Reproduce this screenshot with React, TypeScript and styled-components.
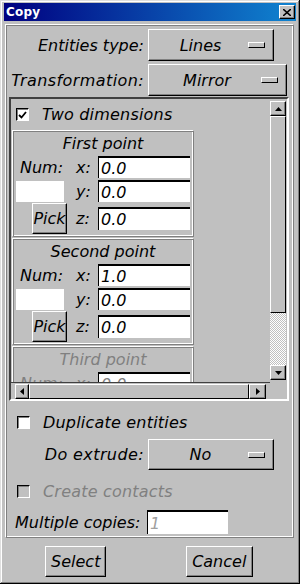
import { createGlobalStyle, styled } from 'styled-components';

const GlobalStyle = createGlobalStyle`
  html, body {
    margin: 0;
    padding: 0;
    background: #c0c0c0;
  }
  body {
    font-family: "DejaVu Sans", "Liberation Sans", sans-serif;
  }
`;

const raised = `
  border: 1px solid;
  border-color: #fff #000 #000 #fff;
  box-shadow: inset -1px -1px 0 #808080;
`;

function UpArrow() {
  return (
    <svg width='7' height='4' viewBox='0 0 7 4'>
      <path d='M3.5 0 L7 4 L0 4 Z' fill='#000' />
    </svg>
  );
}

function DownArrow() {
  return (
    <svg width='7' height='4' viewBox='0 0 7 4'>
      <path d='M0 0 L7 0 L3.5 4 Z' fill='#000' />
    </svg>
  );
}

function LeftArrow() {
  return (
    <svg width='4' height='7' viewBox='0 0 4 7'>
      <path d='M4 0 L4 7 L0 3.5 Z' fill='#000' />
    </svg>
  );
}

function RightArrow() {
  return (
    <svg width='4' height='7' viewBox='0 0 4 7'>
      <path d='M0 0 L4 3.5 L0 7 Z' fill='#000' />
    </svg>
  );
}

function PointGroup({ title, x, disabled }: { title: string; x: string; disabled?: boolean }) {
  return (
    <Group>
      <GroupTitle $disabled={disabled}>{title}</GroupTitle>
      <PointGrid $disabled={disabled}>
        <NumLabel>Num:</NumLabel>
        <CoordLabel>x:</CoordLabel>
        <Field value={x} readOnly $disabled={disabled} />

        <NumBox />
        <CoordLabel>y:</CoordLabel>
        <Field value='0.0' readOnly $disabled={disabled} />

        <PickButton>Pick</PickButton>
        <CoordLabel>z:</CoordLabel>
        <Field value='0.0' readOnly $tall $disabled={disabled} />
      </PointGrid>
    </Group>
  );
}

export default function App() {
  return (
    <>
      <GlobalStyle />
      <Window>
        <TitleBar>
          <TitleText>Copy</TitleText>
          <CloseButton>
            <svg width='8' height='7' viewBox='0 0 8 7'>
              <path d='M0 0 L8 7 M8 0 L0 7' stroke='#000' strokeWidth='1.6' />
            </svg>
          </CloseButton>
        </TitleBar>

        <Frame>
          <FormRow $height={32} $top={2}>
            <Label>Entities type:</Label>
            <DropButton $width={126}>
              <DropText>Lines</DropText>
              <Indicator />
            </DropButton>
          </FormRow>

          <FormRow $height={32} $top={4}>
            <Label $wide>Transformation:</Label>
            <DropButton $width={139}>
              <DropText>Mirror</DropText>
              <Indicator />
            </DropButton>
          </FormRow>

          <ScrollFrame>
            <Viewport>
              <CheckRow $height={31} $left={5}>
                <CheckBox>
                  <svg width='9' height='8' viewBox='0 0 9 8'>
                    <path d='M1 4 L3.5 6.5 L8 1' stroke='#000' strokeWidth='1.8' fill='none' />
                  </svg>
                </CheckBox>
                <CheckText>Two dimensions</CheckText>
              </CheckRow>
              <PointGroup title='First point' x='0.0' />
              <PointGroup title='Second point' x='1.0' />
              <PointGroup title='Third point' x='0.0' disabled />
            </Viewport>

            <VScroll>
              <ArrowButton $h={15}>
                <UpArrow />
              </ArrowButton>
              <Thumb $h={197} />
              <Track />
              <ArrowButton $h={15}>
                <DownArrow />
              </ArrowButton>
            </VScroll>

            <HScroll>
              <ArrowButton $w={14}>
                <LeftArrow />
              </ArrowButton>
              <Thumb $w={220} />
              <ArrowButton $w={17}>
                <RightArrow />
              </ArrowButton>
            </HScroll>
          </ScrollFrame>

          <CheckRow $height={24} $left={10} $top={9}>
            <CheckBox />
            <CheckText>Duplicate entities</CheckText>
          </CheckRow>

          <FormRow $height={31} $top={6}>
            <Label $wide>Do extrude:</Label>
            <DropButton $width={126}>
              <DropText>No</DropText>
              <Indicator />
            </DropButton>
          </FormRow>

          <CheckRow $height={24} $left={10} $top={9}>
            <CheckBox $disabled />
            <CheckText $disabled>Create contacts</CheckText>
          </CheckRow>

          <CopiesRow>
            <CopiesLabel>Multiple copies:</CopiesLabel>
            <CopiesField value='1' readOnly />
          </CopiesRow>
        </Frame>

        <Footer>
          <DialogButton $width={61}>Select</DialogButton>
          <DialogButton $width={67}>Cancel</DialogButton>
        </Footer>
      </Window>
    </>
  );
}

const Window = styled.div`
  box-sizing: border-box;
  width: 300px;
  height: 584px;
  padding: 3px 4px 4px;
  display: flex;
  flex-direction: column;
  background: #c0c0c0;
  box-shadow: inset -1px -1px 0 #000, inset 1px 1px 0 #dfdfdf, inset -2px -2px 0 #808080,
    inset 2px 2px 0 #fff;
`;

const TitleBar = styled.div`
  height: 18px;
  display: flex;
  align-items: center;
  padding: 0 1px 0 2px;
  background: linear-gradient(90deg, #000080 0%, #1084d0 100%);
`;

const TitleText = styled.span`
  color: #fff;
  font-size: 12px;
  font-weight: bold;
  letter-spacing: 0.2px;
`;

const CloseButton = styled.div`
  box-sizing: border-box;
  margin-left: auto;
  width: 16px;
  height: 14px;
  display: flex;
  align-items: center;
  justify-content: center;
  background: #c0c0c0;
  ${raised}
`;

const Frame = styled.div`
  box-sizing: border-box;
  height: 514px;
  margin: 3px 2px 0 1px;
  display: flex;
  flex-direction: column;
  border: 1px solid;
  border-color: #fff #808080 #808080 #fff;
  box-shadow: inset 1px 1px 0 #808080, inset -1px -1px 0 #fff;
  padding: 3px 1px 1px 1px;
`;

const FormRow = styled.div<{ $height: number; $top: number }>`
  display: grid;
  grid-template-columns: 137px auto;
  column-gap: 4px;
  align-items: center;
  height: ${(p) => p.$height}px;
  margin-top: ${(p) => p.$top - 1}px;
`;

const Label = styled.span<{ $wide?: boolean }>`
  text-align: right;
  font-size: 16px;
  font-style: italic;
  color: #000;
  white-space: nowrap;
  letter-spacing: ${(p) => (p.$wide ? '0.4px' : '0')};
`;

const DropButton = styled.div<{ $width: number }>`
  box-sizing: border-box;
  width: ${(p) => p.$width}px;
  height: 100%;
  display: flex;
  align-items: center;
  background: #c0c0c0;
  ${raised}
`;

const DropText = styled.span`
  flex: 1;
  text-align: center;
  font-size: 16px;
  font-style: italic;
  padding-left: 4px;
`;

const Indicator = styled.span`
  box-sizing: border-box;
  width: 17px;
  height: 6px;
  margin-right: 8px;
  border: 1px solid;
  border-color: #fff #000 #000 #fff;
  background: #c0c0c0;
`;

const ScrollFrame = styled.div`
  box-sizing: border-box;
  width: 280px;
  height: 304px;
  margin: 1px 0 0 2px;
  display: grid;
  grid-template-columns: 259px 16px 1px;
  grid-template-rows: 283px 17px;
  border: 2px solid;
  border-color: #404040 #fff #fff #404040;
`;

const Viewport = styled.div`
  grid-column: 1;
  grid-row: 1;
  overflow: hidden;
`;

const CheckRow = styled.div<{ $height: number; $left: number; $top?: number }>`
  display: flex;
  align-items: center;
  gap: 13px;
  height: ${(p) => p.$height}px;
  padding-left: ${(p) => p.$left}px;
  margin-top: ${(p) => p.$top ?? 0}px;
`;

const CheckBox = styled.span<{ $disabled?: boolean }>`
  box-sizing: border-box;
  width: 13px;
  height: 13px;
  display: flex;
  align-items: center;
  justify-content: center;
  border: 1px solid;
  border-color: #000 #fff #fff #000;
  box-shadow: inset 1px 1px 0 #808080;
  background: ${(p) => (p.$disabled ? '#c0c0c0' : '#fff')};
`;

const CheckText = styled.span<{ $disabled?: boolean }>`
  font-size: 16px;
  font-style: italic;
  letter-spacing: 0.2px;
  color: ${(p) => (p.$disabled ? '#808080' : '#000')};
  white-space: nowrap;
`;

const Group = styled.div`
  box-sizing: border-box;
  flex-shrink: 0;
  width: 182px;
  height: 107px;
  margin: 0 0 1px 1px;
  padding: 0 3px 2px;
  border: 1px solid;
  border-color: #fff #808080 #808080 #fff;
  box-shadow: inset 1px 1px 0 #808080, inset -1px -1px 0 #fff;
`;

const GroupTitle = styled.div<{ $disabled?: boolean }>`
  height: 24px;
  display: flex;
  align-items: center;
  justify-content: center;
  font-size: 16px;
  font-style: italic;
  color: ${(p) => (p.$disabled ? '#808080' : '#000')};
`;

const PointGrid = styled.div<{ $disabled?: boolean }>`
  display: grid;
  grid-template-columns: 53px 29px 92px;
  grid-template-rows: 24px 24px 31px;
  align-items: center;
  font-size: 16px;
  font-style: italic;
  color: ${(p) => (p.$disabled ? '#808080' : '#000')};
`;

const NumLabel = styled.span`
  padding-left: 4px;
`;

const CoordLabel = styled.span`
  padding-left: 7px;
`;

const NumBox = styled.span`
  width: 48px;
  height: 21px;
  background: #fff;
`;

const PickButton = styled.div`
  box-sizing: border-box;
  width: 35px;
  height: 31px;
  margin-left: 16px;
  display: flex;
  align-items: center;
  justify-content: center;
  overflow: hidden;
  background: #c0c0c0;
  ${raised}
`;

const Field = styled.input<{ $tall?: boolean; $disabled?: boolean }>`
  box-sizing: border-box;
  width: 92px;
  height: ${(p) => (p.$tall ? 23 : 22)}px;
  margin: 0;
  padding: 0 0 0 2px;
  border: none;
  border-top: 2px solid #000;
  border-left: 1px solid #000;
  outline: none;
  background: #fff;
  font-family: "DejaVu Sans", "Liberation Sans", sans-serif;
  font-size: 16px;
  font-style: italic;
  color: ${(p) => (p.$disabled ? '#808080' : '#000')};
`;

const VScroll = styled.div`
  grid-column: 2;
  grid-row: 1;
  display: flex;
  flex-direction: column;
  padding: 2px 0;
`;

const HScroll = styled.div`
  grid-column: 1;
  grid-row: 2;
  display: flex;
  padding: 1px 0 0 4px;
  border-top: 1px solid #404040;
`;

const ArrowButton = styled.div<{ $w?: number; $h?: number }>`
  box-sizing: border-box;
  flex-shrink: 0;
  width: ${(p) => (p.$w ? `${p.$w}px` : 'auto')};
  height: ${(p) => (p.$h ? `${p.$h}px` : 'auto')};
  display: flex;
  align-items: center;
  justify-content: center;
  background: #c0c0c0;
  ${raised}
`;

const Thumb = styled.div<{ $w?: number; $h?: number }>`
  box-sizing: border-box;
  flex-shrink: 0;
  width: ${(p) => (p.$w ? `${p.$w}px` : 'auto')};
  height: ${(p) => (p.$h ? `${p.$h}px` : 'auto')};
  background: #c0c0c0;
  border: 1px solid;
  border-color: #fff #000 #000 #fff;
`;

const Track = styled.div`
  flex: 1;
  background: repeating-conic-gradient(#c0c0c0 0 25%, #fff 0 50%) 0 0 / 2px 2px;
`;

const CopiesRow = styled.div`
  display: flex;
  align-items: center;
  height: 24px;
  margin-top: 7px;
  padding-left: 8px;
`;

const CopiesLabel = styled(Label)`
  width: 132px;
  text-align: left;
`;

const CopiesField = styled(Field)`
  width: 81px;
  height: 24px;
  color: #a0a0a0;
`;

const Footer = styled.div`
  display: grid;
  grid-template-columns: 1fr 1fr;
  justify-items: center;
  margin-top: 8px;
  padding-right: 5px;
`;

const DialogButton = styled.div<{ $width: number }>`
  box-sizing: border-box;
  width: ${(p) => p.$width}px;
  height: 31px;
  display: flex;
  align-items: center;
  justify-content: center;
  font-size: 16px;
  font-style: italic;
  background: #c0c0c0;
  ${raised}
`;
